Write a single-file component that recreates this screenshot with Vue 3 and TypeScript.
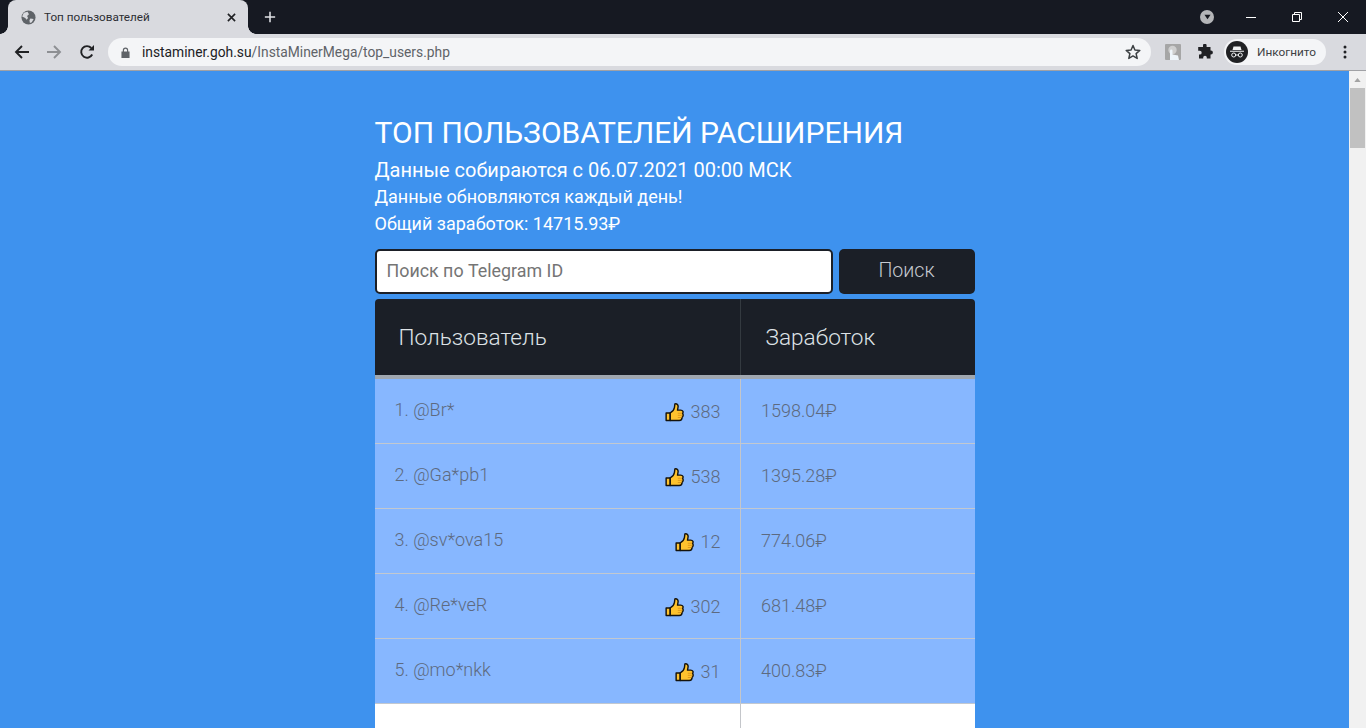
<script setup lang="ts">
interface Row { name: string; likes: number; earned: string; plain?: boolean }
const rows: Row[] = [
  { name: '1. @Br*', likes: 383, earned: '1598.04₽' },
  { name: '2. @Ga*pb1', likes: 538, earned: '1395.28₽' },
  { name: '3. @sv*ova15', likes: 12, earned: '774.06₽' },
  { name: '4. @Re*veR', likes: 302, earned: '681.48₽' },
  { name: '5. @mo*nkk', likes: 31, earned: '400.83₽' },
  { name: '6. @Fe*3333', likes: 27, earned: '385.82₽', plain: true },
]
</script>

<template>
  <div class="window">
    <div class="tabstrip">
      <div class="tab">
        <svg class="favicon" viewBox="0 0 16 16">
          <circle cx="8" cy="8" r="7.5" fill="#5f6368" />
          <path d="M3 2.8 L7 1.8 L8.5 4.5 L6.5 6.5 L7.5 8.5 L6 10.5 L4.5 8.5 L1.2 7 Z M10 9 L13.5 9.5 L11.5 13 L9.5 13.8 L9 11 Z" fill="#d9dadf" />
        </svg>
        <span class="tab-title">Топ пользователей</span>
        <svg class="tab-close" viewBox="0 0 10 10"><path d="M1 1 L9 9 M9 1 L1 9" stroke="#202124" stroke-width="1.8" /></svg>
      </div>
      <svg class="newtab" viewBox="0 0 14 14"><path d="M7 1 V13 M1 7 H13" stroke="#dfe1e5" stroke-width="1.8" /></svg>
      <div class="strip-fill"></div>
      <div class="tabsearch"><svg viewBox="0 0 8 6"><path d="M0.5 0.5 H7.5 L4 5.5 Z" fill="#16181f" /></svg></div>
      <svg class="winbtn" viewBox="0 0 12 12"><path d="M1 6.5 H11" stroke="#fff" stroke-width="1" /></svg>
      <svg class="winbtn" viewBox="0 0 12 12"><path d="M1.5 3.5 H8.5 V10.5 H1.5 Z M3.5 3.5 V1.5 H10.5 V8.5 H8.5" fill="none" stroke="#fff" stroke-width="1" /></svg>
      <svg class="winbtn last" viewBox="0 0 12 12"><path d="M1 1 L11 11 M11 1 L1 11" stroke="#fff" stroke-width="1" /></svg>
    </div>
    <div class="toolbar">
      <svg class="nav" viewBox="0 0 16 16"><path d="M15 8 H2 M8 2 L2 8 L8 14" fill="none" stroke="#202124" stroke-width="1.9" /></svg>
      <svg class="nav" viewBox="0 0 16 16"><path d="M1 8 H14 M8 2 L14 8 L8 14" fill="none" stroke="#8d8f93" stroke-width="1.9" /></svg>
      <svg class="nav" viewBox="0 0 16 16"><path d="M13.2 10.5 A5.8 5.8 0 1 1 12.3 4" fill="none" stroke="#202124" stroke-width="1.9" /><path d="M9.5 6.5 H15 V1 Z" fill="#202124" /></svg>
      <div class="omnibox">
        <svg class="lock" viewBox="0 0 10 12"><path d="M2 5 V3.5 A3 3 0 0 1 8 3.5 V5 H9.5 V12 H0.5 V5 Z M3.3 5 H6.7 V3.5 A1.7 1.7 0 0 0 3.3 3.5 Z" fill="#5f6368" fill-rule="evenodd" /></svg>
        <span class="url"><span class="host">instaminer.goh.su</span>/InstaMinerMega/top_users.php</span>
        <svg class="star" viewBox="0 0 16 16"><path d="M8 1.5 L9.9 6 L14.8 6.4 L11.1 9.6 L12.2 14.4 L8 11.9 L3.8 14.4 L4.9 9.6 L1.2 6.4 L6.1 6 Z" fill="none" stroke="#3c4043" stroke-width="1.5" stroke-linejoin="round" /></svg>
      </div>
      <div class="ext-pic">
        <svg viewBox="0 0 16 16"><rect width="16" height="16" rx="1" fill="#a6a6a6" /><circle cx="7.5" cy="6" r="4.2" fill="#cfcfcf" /><path d="M5 16 V6.8 A1.2 1.2 0 0 1 7.5 6.8 V10.5 L13 11.5 L14 16 Z" fill="#eef5fb" /></svg>
      </div>
      <svg class="puzzle" viewBox="0 0 16 16"><path d="M6 1.5 A1.8 1.8 0 0 1 9.6 1.5 V3 H13.5 V6.6 H14 A1.9 1.9 0 0 1 14 10.4 H13.5 V14.5 H9.8 V13.6 A1.8 1.8 0 0 0 6.2 13.6 V14.5 H2 V10.6 H2.8 A1.9 1.9 0 0 0 2.8 6.8 H1.2 V3 H6 Z" fill="#202124" /></svg>
      <div class="incognito">
        <span class="inc-badge">
          <svg viewBox="0 0 22 22"><circle cx="11" cy="11" r="11" fill="#202124" /><path d="M7.5 5.5 H14.5 L15.5 9 H6.5 Z M4 9.7 H18 V10.7 H4 Z" fill="#f1f3f4" /><circle cx="7.7" cy="14" r="2" fill="none" stroke="#f1f3f4" stroke-width="1" /><circle cx="14.3" cy="14" r="2" fill="none" stroke="#f1f3f4" stroke-width="1" /><path d="M9.7 14 H12.3" stroke="#f1f3f4" stroke-width="1" /></svg>
        </span>
        <span class="inc-label">Инкогнито</span>
      </div>
      <svg class="menu" viewBox="0 0 4 14"><circle cx="2" cy="2" r="1.5" fill="#202124" /><circle cx="2" cy="7" r="1.5" fill="#202124" /><circle cx="2" cy="12" r="1.5" fill="#202124" /></svg>
    </div>
    <div class="viewport">
      <main class="page">
        <div class="content">
          <h1 class="title">ТОП ПОЛЬЗОВАТЕЛЕЙ РАСШИРЕНИЯ</h1>
          <h2 class="sub1">Данные собираются с 06.07.2021 00:00 МСК</h2>
          <h3 class="sub2">Данные обновляются каждый день!</h3>
          <h3 class="sub3">Общий заработок: 14715.93₽</h3>
          <form class="search" @submit.prevent>
            <input class="search-input" type="text" placeholder="Поиск по Telegram ID" />
            <button class="search-btn" type="submit">Поиск</button>
          </form>
          <div class="table">
            <div class="thead">
              <div class="th col-user">Пользователь</div>
              <div class="th col-earn">Заработок</div>
            </div>
            <div v-for="r in rows" :key="r.name" class="row" :class="r.plain ? 'plain' : 'top'">
              <div class="cell col-user user-cell">
                <span class="uname">{{ r.name }}</span>
                <span class="likes">
                  <svg class="thumb" viewBox="0 0 20 20">
                    <path d="M1.2 11 H5.5 V19 H1.2 Z" fill="#ffc32e" stroke="#15130c" stroke-width="1.5" stroke-linejoin="round" />
                    <path d="M5.5 11 C7.5 10 9.5 8 10 5 L10.4 1.4 C12.6 0.8 14.2 2.5 13.7 5 L13.2 8 H16.5 C19 8 19.5 10 18.6 11.5 C19.5 13 19.1 15 18 15.6 C18 18 16.5 19 15 19 H5.5 Z" fill="#ffc32e" stroke="#15130c" stroke-width="1.5" stroke-linejoin="round" />
                    <path d="M13.5 11.3 H18 M13.5 13.5 H18 M13.5 15.8 H17.5" stroke="#d9921a" stroke-width="0.9" />
                  </svg>
                  <span class="count">{{ r.likes }}</span>
                </span>
              </div>
              <div class="cell col-earn earn">{{ r.earned }}</div>
            </div>
          </div>
        </div>
      </main>
      <aside class="scrollbar">
        <svg class="sb-arrow" viewBox="0 0 8 5"><path d="M0 5 L4 0 L8 5 Z" fill="#a3a3a3" /></svg>
        <div class="sb-thumb"></div>
      </aside>
    </div>
  </div>
</template>

<style>
html, body { margin: 0; height: 100%; overflow: hidden; }
#app { height: 100%; }
</style>

<style scoped>
.window { width: 1366px; height: 728px; display: flex; flex-direction: column; overflow: hidden; font-family: Roboto, "Liberation Sans", sans-serif; }
.tabstrip { height: 34px; background: #161922; display: flex; align-items: center; flex: none; }
.tab { position: relative; width: 240px; height: 34px; margin-left: 8px; box-sizing: border-box; background: #d9dadf; border-radius: 8px 8px 0 0; display: flex; align-items: center; padding: 0 4px 0 13px; flex: none; }
.tab::before, .tab::after { content: ""; position: absolute; bottom: 0; width: 8px; height: 8px; }
.tab::before { left: -8px; background: radial-gradient(circle at 0 0, transparent 7.5px, #d9dadf 8px); }
.tab::after { right: -8px; background: radial-gradient(circle at 100% 0, transparent 7.5px, #d9dadf 8px); }
.favicon { width: 15px; height: 15px; flex: none; }
.tab-title { margin-left: 8px; font: 11.7px Roboto, "Liberation Sans", sans-serif; color: #2c2e33; flex: 1; white-space: nowrap; }
.tab-close { width: 9px; height: 9px; margin-right: 8px; flex: none; }
.newtab { width: 12px; height: 12px; margin-left: 16px; flex: none; }
.strip-fill { flex: 1; }
.tabsearch { width: 14px; height: 14px; border-radius: 50%; background: #b4b5b8; display: flex; align-items: center; justify-content: center; margin-right: 31px; }
.tabsearch svg { width: 7px; height: 6px; }
.winbtn { width: 12px; height: 12px; margin-right: 34px; flex: none; }
.winbtn.last { margin-right: 17px; }
.toolbar { height: 36px; background: #d9dadf; border-bottom: 1px solid #a0a1a5; display: flex; align-items: center; flex: none; }
.nav { width: 16px; height: 16px; margin-left: 16px; flex: none; }
.nav:first-child { margin-left: 14px; }
.nav:nth-child(3) { margin-left: 17px; }
.omnibox { width: 1043px; height: 28px; margin-left: 13px; border-radius: 14px; background: #f4f5f7; display: flex; align-items: center; padding: 0 10px 0 13px; box-sizing: border-box; flex: none; }
.lock { width: 9px; height: 11px; flex: none; }
.url { margin-left: 12px; font: 13.8px Roboto, "Liberation Sans", sans-serif; color: #5f6368; flex: 1; white-space: nowrap; }
.host { color: #202124; }
.star { width: 16px; height: 16px; flex: none; }
.ext-pic { width: 16px; height: 16px; margin-left: 14px; flex: none; }
.ext-pic svg { width: 16px; height: 16px; display: block; }
.puzzle { width: 16px; height: 16px; margin-left: 16px; flex: none; }
.incognito { width: 102px; height: 26px; margin-left: 11px; border-radius: 13px; background: #f4f5f7; display: flex; align-items: center; padding-left: 2px; box-sizing: border-box; flex: none; }
.inc-badge { width: 22px; height: 22px; flex: none; }
.inc-badge svg { width: 22px; height: 22px; display: block; }
.inc-label { margin-left: 9px; font: 11.8px Roboto, "Liberation Sans", sans-serif; color: #3c4043; white-space: nowrap; }
.menu { width: 4px; height: 14px; margin-left: 17px; flex: none; }
.viewport { flex: 1; display: flex; min-height: 0; background: #3e92ee; }
.page { flex: 1; min-width: 0; overflow: hidden; display: flex; justify-content: center; }
.content { width: 600px; padding-top: 44px; flex: none; }
.title { margin: 0; font-size: 30px; font-weight: 400; line-height: 36px; color: #fff; white-space: nowrap; }
.sub1 { margin: 7px 0 0; font-size: 20px; font-weight: 400; line-height: 24px; color: #fff; white-space: nowrap; }
.sub2 { margin: 4px 0 0; font-size: 18px; font-weight: 400; line-height: 22px; color: #fff; white-space: nowrap; }
.sub3 { margin: 5px 0 0; font-size: 18px; font-weight: 400; line-height: 22px; color: #fff; white-space: nowrap; }
.search { display: flex; gap: 6px; margin-top: 14px; }
.search-input { width: 458px; height: 45px; box-sizing: border-box; border: 2px solid #1b1f27; border-radius: 5px; background: #fff; padding: 0 10px 2px; font: 17.85px Roboto, sans-serif; color: #333; outline: none; }
.search-input::placeholder { color: #757575; opacity: 1; }
.search-btn { width: 136px; height: 45px; border: 0; border-radius: 5px; background: #1b1f27; color: #c6cad0; font: 300 19.6px Roboto, sans-serif; padding: 0 0 2px; }
.table { margin-top: 5px; }
.thead { display: flex; height: 76px; background: #1b1f27; border-bottom: 4px solid #a0a7b0; border-radius: 4px 4px 0 0; }
.th { font-size: 22.6px; font-weight: 300; color: #dee2e6; display: flex; align-items: center; padding-left: 24px; box-sizing: border-box; }
.th.col-earn { padding-left: 25px; }
.col-user { width: 365px; flex: none; }
.col-earn { flex: 1; min-width: 0; border-left: 1px solid #343a40; }
.row { display: flex; height: 65px; box-sizing: border-box; border-bottom: 1px solid #c2c8d0; }
.row.top { background: #87b7ff; }
.row.plain { background: #fff; }
.row .col-earn { border-left: 1px solid #c4c6ca; }
.cell { box-sizing: border-box; font-size: 18px; font-weight: 300; color: #5d6a80; display: flex; align-items: center; padding-bottom: 2px; }
.user-cell { justify-content: space-between; padding: 0 19px 2px 20px; }
.uname { position: relative; top: -1px; }
.likes { display: flex; align-items: center; gap: 7px; position: relative; top: 1px; }
.thumb { width: 19px; height: 20px; flex: none; position: relative; top: 1px; }
.earn { padding-left: 20.5px; }
.scrollbar { width: 17px; flex: none; background: #f1f1f1; display: flex; flex-direction: column; align-items: center; }
.sb-arrow { width: 7px; height: 4px; margin-top: 7px; }
.sb-thumb { width: 15px; height: 60px; background: #c1c1c1; margin-top: 6px; }
</style>
